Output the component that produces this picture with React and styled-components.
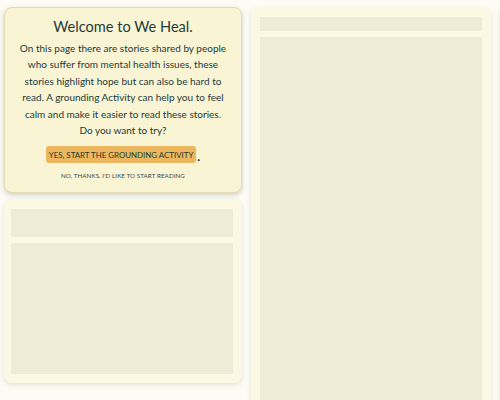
import React from "react";
import styled, { createGlobalStyle } from "styled-components";

const Global = createGlobalStyle`
  html, body {
    margin: 0;
    padding: 0;
    background: #fdfcf4;
  }
  body {
    font-family: Lato, "Open Sans", sans-serif;
  }
`;

function App() {
  return (
    <>
      <Global />
      <Viewport>
        <Board>
          <Column $width={238}>
            <WelcomeCard>
              <Title>Welcome to We Heal.</Title>
              <Intro>
                On this page there are stories shared by people who suffer from
                mental health issues, these stories highlight hope but can also
                be hard to read. A grounding Activity can help you to feel calm
                and make it easier to read these stories.
                <br />
                Do you want to try?
              </Intro>
              <ButtonRow>
                <StartButton>Yes, start the grounding activity</StartButton>
                <Dot>.</Dot>
              </ButtonRow>
              <SkipLink>No, thanks. I'd like to start reading</SkipLink>
            </WelcomeCard>
            <StoryCard $pad="10px 9px 9px 7px">
              <Placeholder $height={28} />
              <Placeholder $height={131} />
            </StoryCard>
          </Column>
          <Column $width={240}>
            <StoryCard $pad="10px 9px">
              <Placeholder $height={14} />
              <Placeholder $height={420} />
            </StoryCard>
          </Column>
          <Column $width={240}>
            <StoryCard $pad="10px 9px">
              <Placeholder $height={14} />
              <Placeholder $height={420} />
            </StoryCard>
          </Column>
        </Board>
      </Viewport>
    </>
  );
}

export default App;

const Viewport = styled.div`
  width: 100vw;
  height: 100vh;
  overflow: hidden;
`;

const Board = styled.div`
  display: flex;
  align-items: flex-start;
  gap: 9px;
  padding: 7px 4px;
  width: max-content;
`;

const Column = styled.div`
  display: flex;
  flex-direction: column;
  gap: 6px;
  width: ${(p) => p.$width}px;
`;

const WelcomeCard = styled.div`
  display: flex;
  flex-direction: column;
  align-items: center;
  height: 186px;
  box-sizing: border-box;
  padding: 9px 10px 0;
  background-color: #f9f5d4;
  border: 1px solid #e3dcb2;
  border-radius: 8px;
  box-shadow: 0px 2px 5px rgba(0, 0, 0, 0.18);
`;

const Title = styled.h2`
  margin: 0;
  font-size: 14.6px;
  font-weight: 400;
  color: #1f3b3c;
  line-height: 20px;
`;

const Intro = styled.p`
  margin: 3px 0 0;
  font-size: 10px;
  line-height: 16.4px;
  text-align: center;
  color: #24383a;
`;

const ButtonRow = styled.div`
  display: flex;
  align-items: flex-end;
  margin-top: 8px;
`;

const StartButton = styled.button`
  font-family: Lato, sans-serif;
  font-size: 7.9px;
  text-transform: uppercase;
  color: #1c3a2a;
  background-color: #ecb65e;
  border: none;
  border-radius: 3px;
  padding: 0 3px;
  height: 17px;
  cursor: pointer;
`;

const Dot = styled.span`
  font-size: 12px;
  font-weight: 700;
  line-height: 12px;
  color: #111;
  margin-left: 1px;
`;

const SkipLink = styled.a`
  margin-top: 9px;
  font-size: 6.2px;
  text-transform: uppercase;
  letter-spacing: 0.1px;
  color: #3a4448;
  cursor: pointer;
`;

const StoryCard = styled.div`
  display: flex;
  flex-direction: column;
  gap: 6px;
  padding: ${(p) => p.$pad};
  background-color: #fbf8e3;
  border-radius: 8px;
  box-shadow: 0px 2px 5px rgba(0, 0, 0, 0.1);
`;

const Placeholder = styled.div`
  height: ${(p) => p.$height}px;
  background-color: #eeebd7;
`;
